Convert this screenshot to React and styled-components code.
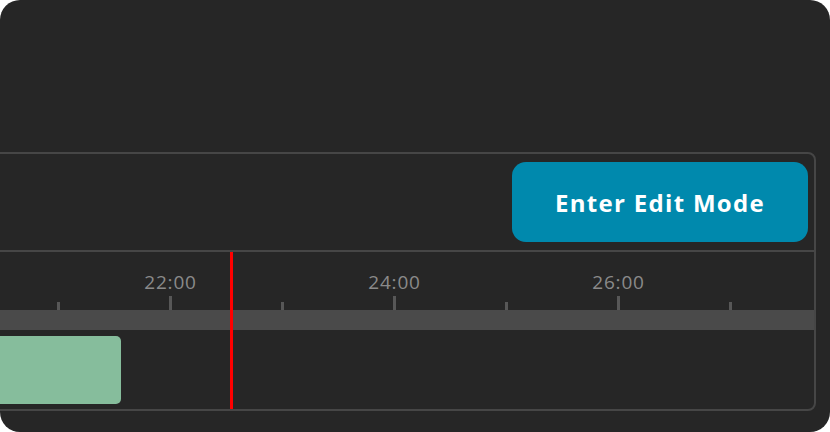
import React from 'react';
import styled, { createGlobalStyle } from 'styled-components';

const UNIT = 112;

const ticks = [
  { major: false },
  { major: true },
  { major: false },
  { major: true, label: '22:00' },
  { major: false },
  { major: true, label: '24:00' },
  { major: false },
  { major: true, label: '26:00' },
  { major: false },
];

const Global = createGlobalStyle`
  html, body {
    margin: 0;
    background: #ffffff;
  }
`;

const App = () => {
  return (
    <>
      <Global />
      <Card>
        <Panel>
          <Header>
            <EditButton>Enter Edit Mode</EditButton>
          </Header>
          <Timeline>
            <Ruler>
              {ticks.map((t, i) => (
                <TickCell key={i}>
                  <TickColumn>
                    {t.label && <TickLabel>{t.label}</TickLabel>}
                    <Tick $major={t.major} />
                  </TickColumn>
                </TickCell>
              ))}
            </Ruler>
            <Bar />
            <Track>
              <Clip style={{ width: 288 }} />
            </Track>
            <Playhead />
          </Timeline>
        </Panel>
      </Card>
    </>
  );
};

const Card = styled.div`
  width: 830px;
  height: 432px;
  box-sizing: border-box;
  background: #262626;
  border-radius: 20px;
  overflow: hidden;
  padding: 152px 14px 0 0;
  font-family: 'Open Sans', 'Liberation Sans', sans-serif;
`;

const Panel = styled.div`
  margin-left: -169px;
  height: 259px;
  box-sizing: border-box;
  border: 2px solid #464646;
  border-radius: 8px;
  overflow: hidden;
  display: flex;
  flex-direction: column;
`;

const Header = styled.div`
  height: 98px;
  box-sizing: border-box;
  padding: 8px 6px;
  border-bottom: 2px solid #464646;
  display: flex;
  justify-content: flex-end;
  align-items: center;
`;

const EditButton = styled.button`
  width: 296px;
  height: 80px;
  border: none;
  border-radius: 14px;
  background: #0089ad;
  color: #ffffff;
  font-family: 'Open Sans', 'Liberation Sans', sans-serif;
  font-weight: 700;
  font-size: 24px;
  letter-spacing: 1.3px;
  cursor: pointer;
`;

const Timeline = styled.div`
  position: relative;
  flex: 1;
  display: flex;
  flex-direction: column;
`;

const Ruler = styled.div`
  height: 58px;
  display: flex;
  align-items: flex-end;
`;

const TickCell = styled.div`
  width: ${UNIT}px;
  flex: none;
  display: flex;
`;

const TickColumn = styled.div`
  width: 3px;
  display: flex;
  flex-direction: column;
  align-items: center;
`;

const TickLabel = styled.span`
  color: #8a8a8a;
  font-size: 19px;
  letter-spacing: 0.8px;
  line-height: 20px;
  white-space: nowrap;
  margin-bottom: 4px;
`;

const Tick = styled.div`
  width: 3px;
  height: ${(p) => (p.$major ? 14 : 8)}px;
  background: #575757;
`;

const Bar = styled.div`
  height: 20px;
  background: #4a4a4a;
`;

const Track = styled.div`
  flex: 1;
  padding-top: 6px;
  display: flex;
  align-items: flex-start;
`;

const Clip = styled.div`
  height: 68px;
  background: #86bd9c;
  border-radius: 0 5px 5px 0;
`;

const Playhead = styled.div`
  position: absolute;
  top: 0;
  bottom: 0;
  left: 397px;
  width: 3px;
  background: #ff0000;
`;

export default App;
